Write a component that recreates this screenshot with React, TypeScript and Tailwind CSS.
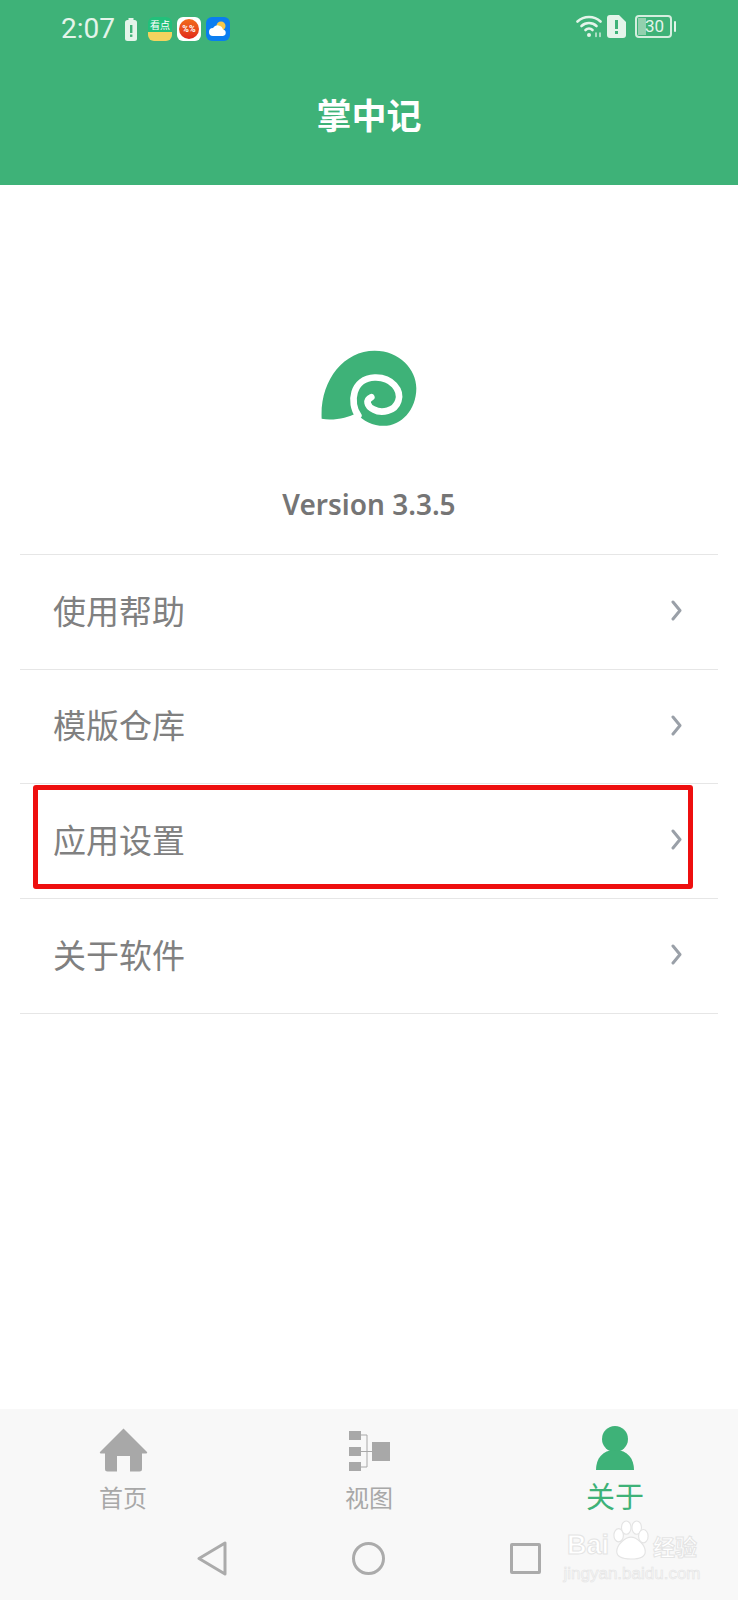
import { type ReactNode } from "react";

const CJK = "font-['Noto_Sans_CJK_SC','Noto_Sans',sans-serif]";
const MENU_ITEMS = ["使用帮助", "模版仓库", "应用设置", "关于软件"];

function AppIcon({ className, children }: { className: string; children: ReactNode }) {
  return (
    <div className={`flex h-6 w-6 items-center justify-center overflow-hidden rounded-[6px] ${className}`}>
      {children}
    </div>
  );
}

function StatusBar() {
  return (
    <div className="flex h-14 items-start justify-between pt-[15px] pl-[61px] pr-[62px] text-[#e4f4ea]">
      <div className="flex items-center">
        <span className="w-[52px] font-['Roboto',sans-serif] text-[28px] leading-[28px]">2:07</span>
        <svg width="12" height="23" viewBox="0 0 12 23" className="ml-3">
          <rect x="3.500" y="0" width="5" height="2" fill="#e4f4ea" />
          <rect x="0" y="2" width="12" height="21" rx="2.500" fill="#e4f4ea" />
          <rect x="5" y="7" width="2.400" height="8" fill="#3eb278" />
          <rect x="5" y="16.500" width="2.400" height="2.400" fill="#3eb278" />
        </svg>
        <div className="ml-[11px] flex gap-[5px]">
          <AppIcon className="flex-col bg-[#22c07a]">
            <span className={`${CJK} text-[10px] leading-[15px] text-white`}>看点</span>
            <div className="h-[9px] w-full bg-[#f4d35e]" />
          </AppIcon>
          <AppIcon className="bg-white">
            <div className="flex h-[20px] w-[20px] items-center justify-center rounded-full bg-gradient-to-b from-[#f26a1b] to-[#e0241b]">
              <span className="font-['Roboto',sans-serif] text-[9px] font-bold leading-none text-white">%%</span>
            </div>
          </AppIcon>
          <AppIcon className="bg-[#0a7df0]">
            <svg width="20" height="18" viewBox="0 0 20 18">
              <circle cx="13" cy="6" r="4.500" fill="#f5c84a" />
              <path d="M5 16a4 4 0 0 1 0-8 5.500 5.500 0 0 1 10 1.500 3.300 3.300 0 0 1 0 6.500z" fill="#fff" />
            </svg>
          </AppIcon>
        </div>
      </div>
      <div className="flex items-center">
        <svg width="28" height="23" viewBox="0 0 28 23" fill="none" stroke="#e4f4ea" strokeWidth="2.600" strokeLinecap="round">
          <path d="M1.500 6.500a17 17 0 0 1 23 0" />
          <path d="M5.500 11a11 11 0 0 1 15 0" />
          <path d="M9.500 15a5 5 0 0 1 7 0" />
          <circle cx="13" cy="20" r="2" fill="#e4f4ea" stroke="none" />
          <path d="M20 21.500v-3.500M24 21.500v-3.500" strokeWidth="1.300" />
        </svg>
        <svg width="19" height="23" viewBox="0 0 19 23" className="ml-[3px]">
          <path d="M3 0h9l7 7v13a3 3 0 0 1-3 3H3a3 3 0 0 1-3-3V3a3 3 0 0 1 3-3z" fill="#e4f4ea" />
          <rect x="8" y="5" width="3" height="9" fill="#3eb278" />
          <rect x="8" y="16" width="3" height="3" fill="#3eb278" />
        </svg>
        <div className="relative ml-[9px] flex h-[23px] w-[37px] items-center overflow-hidden rounded-[4px] border-2 border-[#d5eedf]">
          <div className="absolute inset-y-[1px] left-[1px] w-[8px] bg-[#93d0ae]" />
          <span className="relative w-full pl-[2px] text-center font-['Roboto',sans-serif] text-[17px] leading-none text-[#e4f4ea]">30</span>
        </div>
        <div className="ml-[2px] h-[11px] w-[2px] rounded-sm bg-[#e4f4ea]" />
      </div>
    </div>
  );
}

function SnailLogo() {
  return (
    <svg width="96" height="77" viewBox="184 56 288 230">
      <path
        d="M186 262C180 150 250 58 345 58C420 58 470 115 470 170C470 235 425 283 372 283C340 283 310 268 290 245C265 258 225 268 186 262Z"
        fill="#3eb278"
      />
      <path
        d="M296 252C268 215 278 140 345 138C398 136 426 178 416 208C406 240 365 247 342 234C320 223 318 205 335 197"
        fill="none"
        stroke="#fff"
        strokeWidth="20"
        strokeLinecap="round"
      />
    </svg>
  );
}

function MenuRow({ label, boxed }: { label: string; boxed?: boolean }) {
  return (
    <div className="relative flex h-[114.7px] items-center justify-between border-b border-[#e6e6e6] pb-[3px] pl-[33px] pr-[36px]">
      <span className={`${CJK} text-[33px] text-[#808080]`}>{label}</span>
      <svg width="11" height="21" viewBox="0 0 11 21" fill="none" stroke="#9aa0a8" strokeWidth="3" strokeLinecap="round" strokeLinejoin="round">
        <path d="M2 2l7 8.500-7 8.500" />
      </svg>
      {boxed && (
        <div className="absolute left-[13px] top-[1px] h-[104px] w-[660px] rounded-[3px] border-[5px] border-[#ee0f0f]" />
      )}
    </div>
  );
}

function TabItem({ icon, label, active }: { icon: ReactNode; label: string; active?: boolean }) {
  return (
    <div className="flex flex-col items-center">
      <div className="flex h-[64px] items-end justify-center pb-px">{icon}</div>
      <span
        className={`${CJK} ${active ? "mt-[2px] text-[29px] leading-[40px] text-[#3eb278]" : "mt-[6px] text-[24px] leading-[36px] text-[#a8a8a8]"}`}
      >
        {label}
      </span>
    </div>
  );
}

function WatermarkPaw() {
  return (
    <svg width="38" height="40" viewBox="0 0 40 42" fill="#fff" stroke="#e4e4e4" strokeWidth="1.200" className="mx-[3px] shrink-0">
      <ellipse cx="7" cy="16" rx="5" ry="7" />
      <ellipse cx="15" cy="8" rx="5" ry="7" />
      <ellipse cx="26" cy="8" rx="5" ry="7" />
      <ellipse cx="33" cy="17" rx="5" ry="7" />
      <path d="M20 18c6 0 15 8 15 15 0 5-5 8-15 8S5 38 5 33c0-7 9-15 15-15z" />
    </svg>
  );
}

export default function App() {
  return (
    <div className="flex h-[1600px] w-[738px] flex-col bg-white">
      <header className="h-[185px] shrink-0 bg-[#3eb278]">
        <StatusBar />
        <h1 className={`${CJK} mt-[35px] text-center text-[35px] font-bold leading-[46px] text-white`}>掌中记</h1>
      </header>

      <main className="flex-1">
        <div className="flex flex-col items-center pt-[165px]">
          <SnailLogo />
          <span className="mt-[59px] font-['Noto_Sans',sans-serif] text-[28px] font-semibold leading-[36px] text-[#757575]">
            Version 3.3.5
          </span>
        </div>
        <div className="mx-5 mt-[32px] border-t border-[#e6e6e6]">
          {MENU_ITEMS.map((item) => (
            <MenuRow key={item} label={item} boxed={item === "应用设置"} />
          ))}
        </div>
      </main>

      <footer className="relative h-[191px] shrink-0 bg-[#f8f8f8]">
        <div className="grid h-[133px] grid-cols-3">
          <TabItem
            label="首页"
            icon={
              <svg width="49" height="44" viewBox="0 0 49 44" fill="#a8a8a8">
                <path d="M24.500 0.500L48 24a1 1 0 0 1-.8 1.500H43V41a2.500 2.500 0 0 1-2.500 2.500H31V28H18V43.500H8.500A2.500 2.500 0 0 1 6 41V25.500H1.800A1 1 0 0 1 1 24z" />
              </svg>
            }
          />
          <TabItem
            label="视图"
            icon={
              <svg width="41" height="41" viewBox="0 0 41 41" fill="#a8a8a8">
                <rect x="0" y="0" width="12" height="9" />
                <rect x="0" y="16" width="12" height="9" />
                <rect x="0" y="31" width="12" height="9" />
                <rect x="23" y="11" width="18" height="19" />
                <path d="M12 4h6v32h-6M12 20.500h11" fill="none" stroke="#a8a8a8" strokeWidth="1" />
              </svg>
            }
          />
          <TabItem
            active
            label="关于"
            icon={
              <svg width="38" height="44" viewBox="0 0 38 44" fill="#3eb278" className="mb-[2px]">
                <circle cx="19" cy="13" r="13" />
                <path d="M0 44c0-11 6-20 19-20s19 9 19 20z" />
              </svg>
            }
          />
        </div>

        <div className="flex h-[58px] items-center justify-center gap-[125px] pb-[26px]">
          <svg width="30" height="35" viewBox="0 0 30 35" fill="none" stroke="#ababab" strokeWidth="3" strokeLinejoin="round">
            <path d="M28 2v31L2 17.500z" />
          </svg>
          <div className="h-[33px] w-[33px] rounded-full border-[3px] border-[#ababab]" />
          <div className="h-[31px] w-[31px] rounded-[2px] border-[3px] border-[#ababab]" />
        </div>

        <div className="absolute left-[566px] top-[111px] flex w-[132px] flex-col items-center text-white">
          <div className="flex items-end whitespace-nowrap">
            <span className="font-['Liberation_Sans',sans-serif] text-[27px] font-bold leading-[30px] [-webkit-text-stroke:1px_#e4e4e4]">Bai</span>
            <WatermarkPaw />
            <span className={`${CJK} text-[22px] font-bold leading-[30px] [-webkit-text-stroke:1px_#e4e4e4]`}>经验</span>
          </div>
          <span className="mt-[5px] whitespace-nowrap font-['Liberation_Sans',sans-serif] text-[17px] leading-[18px] text-[#f8f8f8] [-webkit-text-stroke:0.6px_#e4e4e4]">
            jingyan.baidu.com
          </span>
        </div>
      </footer>
    </div>
  );
}
